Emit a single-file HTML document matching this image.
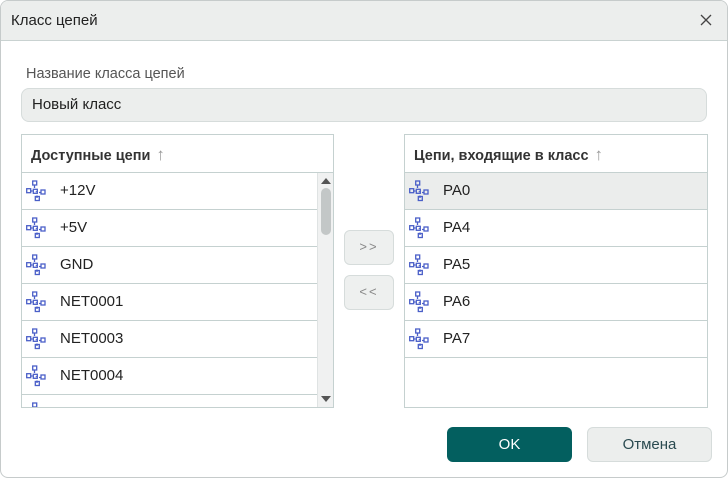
<!DOCTYPE html><html><head><meta charset="utf-8"><style>
*{box-sizing:border-box;margin:0;padding:0}
body{width:728px;height:478px;background:#fff;font-family:"Liberation Sans",sans-serif;position:relative;overflow:hidden;color:#222}
.dlg{position:absolute;left:0;top:0;width:728px;height:478px;border:1px solid #c6cbcb;border-radius:8px;overflow:hidden;background:#fff}
.tb{position:absolute;left:0;top:0;right:0;height:40px;background:#eceeed;border-bottom:1px solid #c9d2d1}
.tb span{position:absolute;left:10px;top:11px;font-size:15px;color:#222}
.x{position:absolute;right:14px;top:12px}
.abs{position:absolute}
.lbl{left:25px;top:65px;font-size:14.5px;color:#555}
.inp{left:20px;top:87px;width:686px;height:34px;background:#eceeed;border:1px solid #d6dcdb;border-radius:8px;font-size:15px;padding:7px 10px}
.list{border:1px solid #c5d1d0;background:#fff;overflow:hidden}
.hd{height:38px;border-bottom:1px solid #c5d1d0;font-weight:bold;font-size:14.5px;color:#333;padding:10px 9px}
.hd i{font-style:normal;font-weight:normal;color:#999;margin-left:6px;font-size:17px}
.row{height:37px;border-bottom:1px solid #c5d1d0;position:relative;font-size:15px}
.row svg{position:absolute;left:2px;top:6px}
.row span{position:absolute;left:38px;top:9px}
.sel{background:#ebedec}
.btn{border:1px solid #d6dcdb;background:#eef0ef;border-radius:6px;color:#888;font-size:13px;letter-spacing:2px;text-align:center;line-height:32px}
</style></head><body>
<svg width="0" height="0" style="position:absolute"><defs><g id="ic" fill="none" stroke="#4a5fc8" stroke-width="1.3"><path d="M10.5 9V6.5M8.5 12H7M15 13.5H17M13 16.5V19M12 12.3L12.5 13"/><rect x="8.7" y="2" width="4" height="4"/><rect x="2.7" y="9.7" width="4" height="4"/><rect x="9.3" y="10.3" width="4" height="4"/><rect x="17" y="11" width="4" height="4"/><rect x="11.3" y="17.5" width="4" height="4"/></g></defs></svg>
<div class="dlg">
<div class="tb"><span>Класс цепей</span><svg class="x" width="14" height="14"><path d="M2 2L12 12M12 2L2 12" stroke="#444" stroke-width="1.3"/></svg></div>
<div class="abs lbl">Название класса цепей</div>
<div class="abs inp">Новый класс</div>
<div class="abs list" style="left:20px;top:133px;width:313px;height:274px">
<div class="hd">Доступные цепи<i>↑</i></div>
<div class="row"><svg width="24" height="24"><use href="#ic"/></svg><span>+12V</span></div>
<div class="row"><svg width="24" height="24"><use href="#ic"/></svg><span>+5V</span></div>
<div class="row"><svg width="24" height="24"><use href="#ic"/></svg><span>GND</span></div>
<div class="row"><svg width="24" height="24"><use href="#ic"/></svg><span>NET0001</span></div>
<div class="row"><svg width="24" height="24"><use href="#ic"/></svg><span>NET0003</span></div>
<div class="row"><svg width="24" height="24"><use href="#ic"/></svg><span>NET0004</span></div>
<div class="row"><svg width="24" height="24"><use href="#ic"/></svg></div>
<div class="abs" style="left:295px;top:38px;width:17px;height:235px;background:#f0f1f1;border-left:1px solid #dfe3e3">
<div class="abs" style="left:3px;top:5px;width:0;height:0;border-left:5px solid transparent;border-right:5px solid transparent;border-bottom:6px solid #555"></div>
<div class="abs" style="left:3px;top:15px;width:10px;height:47px;background:#c3c7c7;border-radius:5px"></div>
<div class="abs" style="left:3px;top:223px;width:0;height:0;border-left:5px solid transparent;border-right:5px solid transparent;border-top:6px solid #555"></div>
</div>
</div>
<div class="abs btn" style="left:343px;top:229px;width:50px;height:35px">&gt;&gt;</div>
<div class="abs btn" style="left:343px;top:274px;width:50px;height:35px">&lt;&lt;</div>
<div class="abs list" style="left:403px;top:133px;width:304px;height:274px">
<div class="hd">Цепи, входящие в класс<i>↑</i></div>
<div class="row sel"><svg width="24" height="24"><use href="#ic"/></svg><span>PA0</span></div>
<div class="row"><svg width="24" height="24"><use href="#ic"/></svg><span>PA4</span></div>
<div class="row"><svg width="24" height="24"><use href="#ic"/></svg><span>PA5</span></div>
<div class="row"><svg width="24" height="24"><use href="#ic"/></svg><span>PA6</span></div>
<div class="row"><svg width="24" height="24"><use href="#ic"/></svg><span>PA7</span></div>
</div>
<div class="abs" style="left:446px;top:426px;width:125px;height:35px;background:#035f5f;border-radius:6px;color:#fff;text-align:center;line-height:35px;font-size:15px">OK</div>
<div class="abs" style="left:586px;top:426px;width:125px;height:35px;background:#eceeed;border:1px solid #d6dcdb;border-radius:6px;color:#2a4a50;text-align:center;line-height:33px;font-size:15px">Отмена</div>
</div>
</body></html>
